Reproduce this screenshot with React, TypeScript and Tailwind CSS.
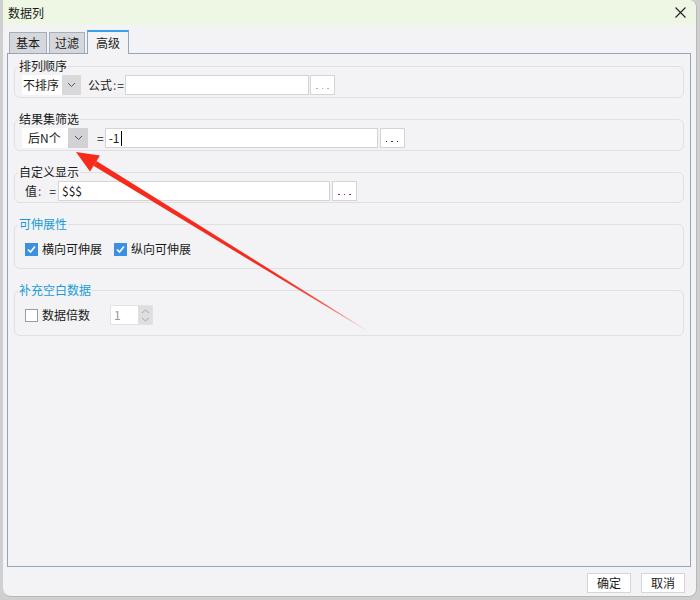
import React from "react";

const font = { fontFamily: '"Noto Sans CJK SC", "Noto Sans", sans-serif' };

function Chevron({ className = "" }: { className?: string }) {
  return (
    <svg width="9" height="6" viewBox="0 0 9 6" className={className}>
      <path d="M1 1 L4.5 4.5 L8 1" fill="none" stroke="#555" strokeWidth="1" />
    </svg>
  );
}

function Dots({ color }: { color: string }) {
  return (
    <div className="flex h-[20px] w-[25px] items-end justify-center gap-[4px] border border-[#d4d4d4] bg-white pb-[5px]">
      <span className="h-[1.5px] w-[1.5px]" style={{ background: color }} />
      <span className="h-[1.5px] w-[1.5px]" style={{ background: color }} />
      <span className="h-[1.5px] w-[1.5px]" style={{ background: color }} />
    </div>
  );
}

function Check({ checked }: { checked: boolean }) {
  return checked ? (
    <div className="flex h-[13px] w-[13px] items-center justify-center bg-[#3c90e4]">
      <svg width="11" height="11" viewBox="0 0 11 11">
        <path d="M2 5.5 L4.5 8 L9 2.5" fill="none" stroke="white" strokeWidth="1.6" />
      </svg>
    </div>
  ) : (
    <div className="h-[13px] w-[13px] border border-[#9c9c9c] bg-white" />
  );
}

function Section({
  title,
  blue,
  h,
  children,
}: {
  title: string;
  blue?: boolean;
  h: string;
  children: React.ReactNode;
}) {
  return (
    <fieldset className={`rounded-[6px] border border-[#e0e0e4] ${h}`}>
      <legend
        className={`ml-[3px] px-[1px] text-[12px] leading-[16px] ${blue ? "text-[#1a9bd8]" : "text-[#1a1a1a]"}`}
      >
        {title}
      </legend>
      <div className="pl-[7px]">{children}</div>
    </fieldset>
  );
}

export default function App() {
  return (
    <div className="relative h-[600px] w-[700px] overflow-hidden bg-[#cfcfcf]" style={font}>
      <div className="ml-[3px] flex h-[597px] w-[694px] flex-col overflow-hidden rounded-tr-[8px] rounded-b-[8px] border-r border-b border-[#b8b8b8] bg-[#f3f3f5]">
        {/* Title bar */}
        <div className="flex h-[25px] shrink-0 items-center justify-between bg-[#eef7e4] pl-[5px] pr-[10px]">
          <span className="text-[12px] leading-none text-[#1a1a1a]">数据列</span>
          <svg width="11" height="11" viewBox="0 0 11 11">
            <path d="M0.5 0.5 L10.5 10.5 M10.5 0.5 L0.5 10.5" stroke="#222" strokeWidth="1.1" />
          </svg>
        </div>

        {/* Tabs */}
        <div className="ml-[6px] mt-[5px] flex h-[23px] items-end gap-[2px]">
          <div className="flex h-[21px] w-[38px] items-center justify-center border border-b-0 border-[#a3aebe] bg-[#d6d7db] text-[12px] text-[#1a1a1a]">
            基本
          </div>
          <div className="flex h-[21px] w-[36px] items-center justify-center border border-b-0 border-[#a3aebe] bg-[#d6d7db] text-[12px] text-[#1a1a1a]">
            过滤
          </div>
          <div className="relative z-10 -mb-px flex h-[24px] w-[42px] items-center justify-center border-x border-[#93a4bc] border-t-2 border-t-[#3b9ff0] bg-[#f3f3f5] text-[12px] text-[#1a1a1a]">
            高级
          </div>
        </div>

        {/* Tab panel */}
        <div className="ml-[4px] flex h-[514px] w-[684px] flex-col gap-[13px] border border-[#93a4bc] px-[6px] pt-[4px]">
          <Section title="排列顺序" h="h-[40px]">
            <div className="mt-[1px] flex h-[20px] items-center text-[12px] text-[#1a1a1a]">
              <div className="flex h-[20px] w-[59px]">
                <div className="flex w-[40px] items-center bg-white pl-[1px]">不排序</div>
                <div className="flex w-[19px] items-center justify-center bg-[#d9d9dc]">
                  <Chevron />
                </div>
              </div>
              <span className="ml-[7px]">公式</span>
              <span className="ml-[1px] text-[#8a3a8a]">:</span>
              <span className="ml-[1px]">=</span>
              <div className="ml-[1px] h-[20px] w-[184px] border border-[#d4d4d4] bg-white" />
              <div className="ml-[1px]">
                <Dots color="#c8a3c8" />
              </div>
            </div>
          </Section>

          <Section title="结果集筛选" h="h-[40px]">
            <div className="mt-[1px] flex h-[20px] items-center text-[12px] text-[#1a1a1a]">
              <div className="flex h-[20px] w-[66px]">
                <div className="flex w-[46px] items-center bg-white pl-[6px]">后N个</div>
                <div className="flex w-[20px] items-center justify-center bg-[#d2d2d6]">
                  <Chevron />
                </div>
              </div>
              <span className="ml-[9px]">=</span>
              <div className="ml-[1px] flex h-[20px] w-[273px] items-center border border-[#d4d4d4] bg-white pl-[3px]">
                -1<span className="ml-[1px] h-[15px] w-px bg-black" />
              </div>
              <div className="ml-[2px]">
                <Dots color="#333" />
              </div>
            </div>
          </Section>

          <Section title="自定义显示" h="h-[39px]">
            <div className="mt-[1px] flex h-[20px] items-center text-[12px] text-[#1a1a1a]">
              <span className="ml-[3px]">值</span>
              <span className="ml-[1px] text-[#8a3a8a]">:</span>
              <span className="ml-[8px]">=</span>
              <div className="ml-[2px] flex h-[20px] w-[272px] items-center border border-[#d4d4d4] bg-white pl-[3px]">
                $$$
              </div>
              <div className="ml-[2px]">
                <Dots color="#7a2f7a" />
              </div>
            </div>
          </Section>

          <Section title="可伸展性" blue h="h-[53px]">
            <div className="mt-[7px] flex h-[20px] items-center text-[12px] text-[#1a1a1a]">
              <div className="ml-[3px]">
                <Check checked />
              </div>
              <span className="ml-[4px]">横向可伸展</span>
              <div className="ml-[12px]">
                <Check checked />
              </div>
              <span className="ml-[4px]">纵向可伸展</span>
            </div>
          </Section>

          <Section title="补充空白数据" blue h="h-[54px]">
            <div className="mt-[7px] flex h-[20px] items-center text-[12px] text-[#1a1a1a]">
              <div className="ml-[3px]">
                <Check checked={false} />
              </div>
              <span className="ml-[4px]">数据倍数</span>
              <div className="ml-[20px] flex h-[20px] w-[43px] border border-[#e2e2e2]">
                <div className="flex w-[28px] items-center bg-white pl-[3px] text-[#999]">1</div>
                <div className="flex w-[14px] flex-col items-center justify-center gap-[3px] bg-[#dedee0]">
                  <svg width="9" height="5" viewBox="0 0 9 5">
                    <path d="M1 4 L4.5 1 L8 4" fill="none" stroke="#aaa" strokeWidth="1" />
                  </svg>
                  <svg width="9" height="5" viewBox="0 0 9 5">
                    <path d="M1 1 L4.5 4 L8 1" fill="none" stroke="#aaa" strokeWidth="1" />
                  </svg>
                </div>
              </div>
            </div>
          </Section>
        </div>

        {/* Buttons */}
        <div className="mt-[6px] flex justify-end gap-[10px] pr-[11px]">
          <button className="flex h-[20px] w-[44px] items-center justify-center border border-[#d6d6d6] bg-white text-[12px] text-[#1a1a1a]">
            确定
          </button>
          <button className="flex h-[20px] w-[44px] items-center justify-center border border-[#d6d6d6] bg-white text-[12px] text-[#1a1a1a]">
            取消
          </button>
        </div>
      </div>

      {/* Red annotation arrow */}
      <svg className="pointer-events-none absolute left-0 top-0" width="700" height="600">
        <defs>
          <linearGradient id="fade" x1="366" y1="330" x2="76" y2="152" gradientUnits="userSpaceOnUse">
            <stop offset="0" stopColor="#f62b1c" stopOpacity="0.1" />
            <stop offset="0.15" stopColor="#f62b1c" stopOpacity="0.8" />
            <stop offset="0.3" stopColor="#f62b1c" stopOpacity="1" />
            <stop offset="1" stopColor="#f62b1c" stopOpacity="1" />
          </linearGradient>
        </defs>
        <polygon points="93.5,165.8 96.5,160.9 366.2,329.7 365.8,330.3" fill="url(#fade)" />
        <polygon points="76,152 90,171.5 100,155.5" fill="#f62b1c" />
      </svg>
    </div>
  );
}
